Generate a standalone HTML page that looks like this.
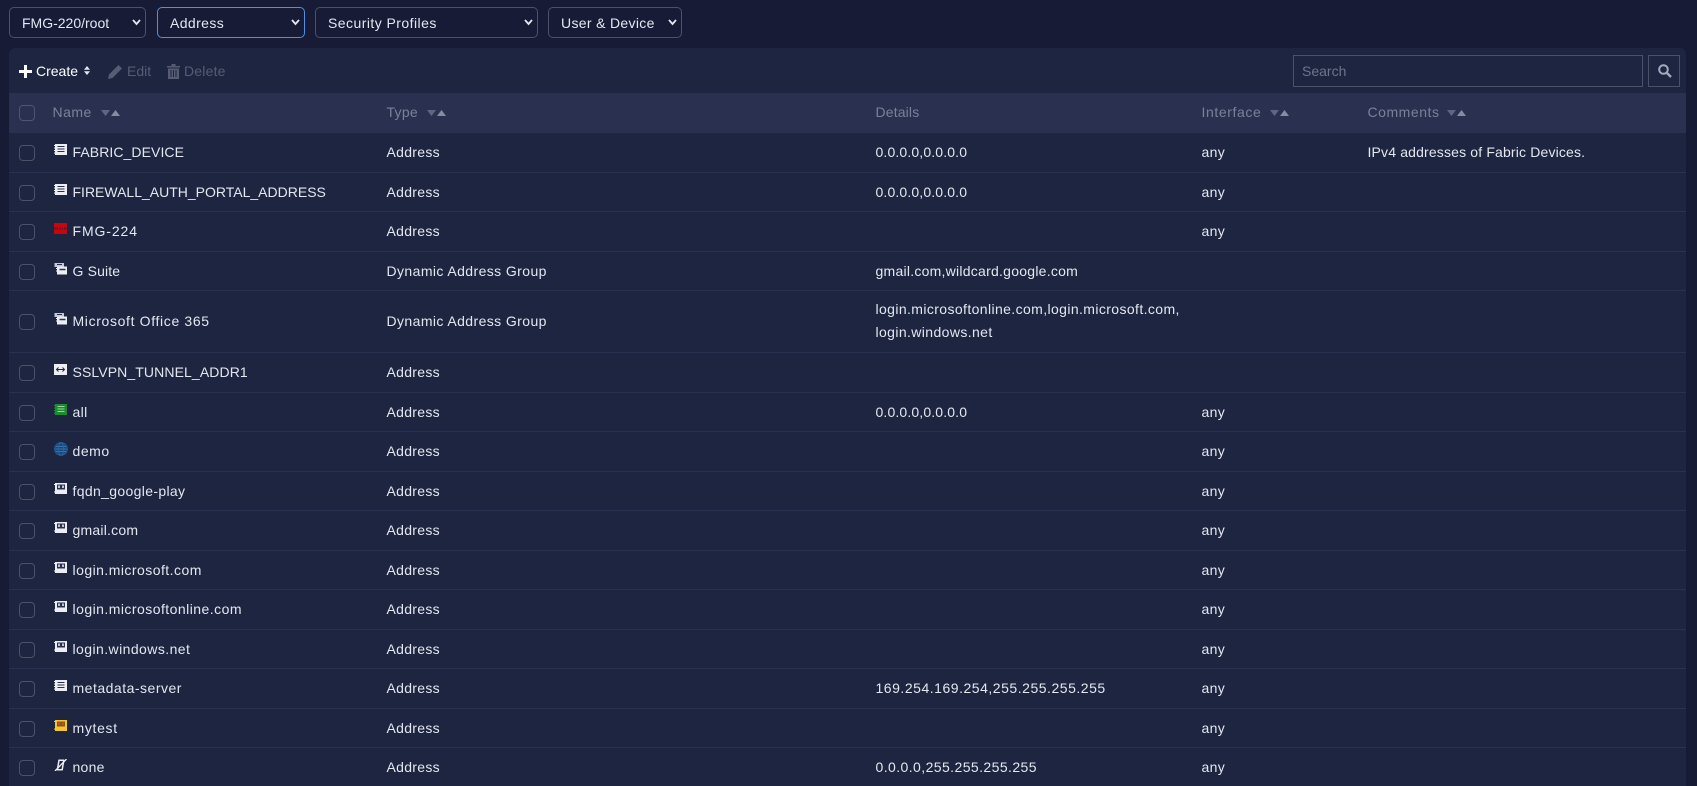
<!DOCTYPE html>
<html lang="en">
<head>
<meta charset="utf-8">
<title>Addresses</title>
<style>
*{box-sizing:border-box}
html,body{margin:0;padding:0;width:1697px;height:786px;overflow:hidden;background:#171b36;font-family:"Liberation Sans",sans-serif;font-size:14px;color:#e3e7f0}
.sel{position:absolute;top:7px;height:31px}
.sel select{appearance:none;-webkit-appearance:none;width:100%;height:100%;background:#171b36;border:1px solid #4b5169;border-radius:5px;color:#e3e7f0;font:14px "Liberation Sans",sans-serif;padding:0 0 0 12px;outline:0}
.sel.on select{border-color:#4f90e2}
.sel svg{position:absolute;right:5px;top:12px;pointer-events:none}
#panel{position:absolute;left:9px;top:48px;width:1677px;height:738px;background:#1e2540;border-radius:6px 6px 0 0;overflow:hidden}
.tb{position:absolute;white-space:nowrap;line-height:18px}
.dis{color:#565c74}
#search{position:absolute;left:1284px;top:7px;width:350px;height:32px;border:1px solid #4b5169;background:#1e2540;color:#6d748b;line-height:30px;padding-left:8px}
#sbtn{position:absolute;left:1639px;top:7px;width:32px;height:32px;border:1px solid #4b5169}
#head{position:absolute;left:0;top:45px;width:1677px;height:40px;background:#2a3150;color:#79819a;line-height:39px}
#head span.h{position:absolute;top:0;white-space:nowrap}
#head svg.s{position:absolute;top:17px}
.r{position:absolute;left:0;width:1677px;border-bottom:1px solid #2a3150}
.r span{position:absolute;top:50%;margin-top:-10px;line-height:20px;white-space:nowrap;color:#e3e7f0}
.n{left:63.5px}.t{left:377.5px;letter-spacing:.3px}.d{left:866.5px}.i{left:1192.5px;letter-spacing:.36px}.c{left:1358.5px;letter-spacing:.16px}
.cb{position:absolute;left:10px;top:50%;margin-top:-7px;width:16px;height:16px;border:1px solid #4b5169;border-radius:4px}
.r svg{position:absolute;left:45px;top:50%;margin-top:-8px}
.w2{line-height:23px!important;margin-top:-23px!important}
.dg{letter-spacing:.41px}
</style>
</head>
<body>
<div class="sel" style="left:9px;width:137px"><select><option>FMG-220/root</option></select><svg width="9" height="7" viewBox="0 0 9 7"><path d="M1 1l3.500 4L8 1" fill="none" stroke="#e3e7f0" stroke-width="1.8"/></svg></div>
<div class="sel on" style="left:157px;width:148px"><select style="letter-spacing:.4px"><option>Address</option></select><svg width="9" height="7" viewBox="0 0 9 7"><path d="M1 1l3.500 4L8 1" fill="none" stroke="#e3e7f0" stroke-width="1.8"/></svg></div>
<div class="sel" style="left:315px;width:223px"><select style="letter-spacing:.45px"><option>Security Profiles</option></select><svg width="9" height="7" viewBox="0 0 9 7"><path d="M1 1l3.500 4L8 1" fill="none" stroke="#e3e7f0" stroke-width="1.8"/></svg></div>
<div class="sel" style="left:548px;width:134px"><select style="letter-spacing:.33px"><option>User &amp; Device</option></select><svg width="9" height="7" viewBox="0 0 9 7"><path d="M1 1l3.500 4L8 1" fill="none" stroke="#e3e7f0" stroke-width="1.8"/></svg></div>

<div id="panel">
  <svg style="position:absolute;left:10px;top:17px" width="13" height="13" viewBox="0 0 13 13"><path d="M6.500 0v13M0 6.500h13" stroke="#fff" stroke-width="3"/></svg>
  <span class="tb" style="left:27px;top:14px;color:#fff">Create</span>
  <svg style="position:absolute;left:74.500px;top:18px" width="6" height="9" viewBox="0 0 6 9"><path d="M3 0l3 3.800H0zM3 9L0 5.200h6z" fill="#e3e7f0"/></svg>
  <svg style="position:absolute;left:99px;top:16px" width="15" height="15" viewBox="0 0 15 15"><path d="M0 15l1-4.500L10.500 1l3.500 3.500L4.500 14z" fill="#565c74"/></svg>
  <span class="tb dis" style="left:118px;top:14px">Edit</span>
  <svg style="position:absolute;left:158px;top:16px" width="13" height="15" viewBox="0 0 13 15"><path d="M0 2h4.500V0h4v2H13v1.500H0zM1 4.500h11V15H1z" fill="#565c74"/><path d="M4 6v7M6.500 6v7M9 6v7" stroke="#1e2540"/></svg>
  <span class="tb dis" style="left:175px;top:14px;letter-spacing:.2px">Delete</span>
  <div id="search">Search</div>
  <div id="sbtn"><svg style="position:absolute;left:9px;top:8px" width="14" height="14" viewBox="0 0 14 14"><circle cx="5.500" cy="5.500" r="4.300" fill="none" stroke="#a3aabc" stroke-width="2"/><path d="M8.800 8.800L13 13" stroke="#a3aabc" stroke-width="2.400"/></svg></div>

  <div id="head">
    <div class="cb" style="top:12px;margin:0;border-color:#4f566f"></div>
    <span class="h" style="left:43.500px;letter-spacing:.5px">Name</span>
    <svg class="s" style="left:91.500px" width="20" height="6" viewBox="0 0 20 6"><path d="M0 0h9L4.500 6z" fill="#5f6780"/><path d="M10 6h9L14.500 0z" fill="#858ca2"/></svg>
    <span class="h" style="left:377.500px;letter-spacing:.27px">Type</span>
    <svg class="s" style="left:417.500px" width="20" height="6" viewBox="0 0 20 6"><path d="M0 0h9L4.500 6z" fill="#5f6780"/><path d="M10 6h9L14.500 0z" fill="#858ca2"/></svg>
    <span class="h" style="left:866.500px;letter-spacing:.15px">Details</span>
    <span class="h" style="left:1192.500px;letter-spacing:.6px">Interface</span>
    <svg class="s" style="left:1261px" width="20" height="6" viewBox="0 0 20 6"><path d="M0 0h9L4.500 6z" fill="#5f6780"/><path d="M10 6h9L14.500 0z" fill="#858ca2"/></svg>
    <span class="h" style="left:1358.500px;letter-spacing:.54px">Comments</span>
    <svg class="s" style="left:1438px" width="20" height="6" viewBox="0 0 20 6"><path d="M0 0h9L4.500 6z" fill="#5f6780"/><path d="M10 6h9L14.500 0z" fill="#858ca2"/></svg>
  </div>

  <div class="r" style="top:85px;height:39.500px"><div class="cb"></div>
    <svg width="13" height="12" viewBox="0 0 13 12"><path d="M1 0h12v11H1z" fill="#eceef3"/><path d="M0 1.500h2M0 4h2M0 6.500h2M0 9h2" stroke="#eceef3"/><path d="M3.500 2.500h7M3.500 5h7M3.500 7.500h7" stroke="#2a3150"/></svg>
    <span class="n" style="letter-spacing:.08px">FABRIC_DEVICE</span><span class="t">Address</span><span class="d" style="letter-spacing:.14px">0.0.0.0,0.0.0.0</span><span class="i">any</span><span class="c">IPv4 addresses of Fabric Devices.</span></div>
  <div class="r" style="top:124.500px;height:39.500px"><div class="cb"></div>
    <svg width="13" height="12" viewBox="0 0 13 12"><path d="M1 0h12v11H1z" fill="#eceef3"/><path d="M0 1.500h2M0 4h2M0 6.500h2M0 9h2" stroke="#eceef3"/><path d="M3.500 2.500h7M3.500 5h7M3.500 7.500h7" stroke="#2a3150"/></svg>
    <span class="n">FIREWALL_AUTH_PORTAL_ADDRESS</span><span class="t">Address</span><span class="d" style="letter-spacing:.14px">0.0.0.0,0.0.0.0</span><span class="i">any</span></div>
  <div class="r" style="top:164px;height:39.500px"><div class="cb"></div>
    <svg width="13" height="12" viewBox="0 0 13 12"><path d="M0 0h13v11H0z" fill="#c8040f"/><path d="M0 5.500h13" stroke="#4a1a28" stroke-width="2" stroke-dasharray="1.500 1"/></svg>
    <span class="n" style="letter-spacing:.9px">FMG-224</span><span class="t">Address</span><span class="i">any</span></div>
  <div class="r" style="top:203.500px;height:39.500px"><div class="cb"></div>
    <svg width="13" height="12" viewBox="0 0 13 12"><path d="M1 0h9v4H1z" fill="#c4c8d4"/><path d="M0 1h2M0 3h2" stroke="#c4c8d4"/><path d="M3 1.500h5" stroke="#2a3150"/><path d="M3 3.500h10V11.500H3z" fill="#eceef3"/><path d="M2 5.500h2M2 8h2" stroke="#eceef3"/><path d="M5.500 6.500h6" stroke="#2a3150" stroke-width="1.500"/></svg>
    <span class="n" style="letter-spacing:.15px">G Suite</span><span class="t dg">Dynamic Address Group</span><span class="d" style="letter-spacing:.25px">gmail.com,wildcard.google.com</span></div>
  <div class="r" style="top:243px;height:61.500px"><div class="cb"></div>
    <svg width="13" height="12" viewBox="0 0 13 12"><path d="M1 0h9v4H1z" fill="#c4c8d4"/><path d="M0 1h2M0 3h2" stroke="#c4c8d4"/><path d="M3 1.500h5" stroke="#2a3150"/><path d="M3 3.500h10V11.500H3z" fill="#eceef3"/><path d="M2 5.500h2M2 8h2" stroke="#eceef3"/><path d="M5.500 6.500h6" stroke="#2a3150" stroke-width="1.500"/></svg>
    <span class="n" style="letter-spacing:.65px">Microsoft Office 365</span><span class="t dg">Dynamic Address Group</span><span class="d w2" style="letter-spacing:.39px">login.microsoftonline.com,login.microsoft.com,<br>login.windows.net</span></div>
  <div class="r" style="top:304.500px;height:40px"><div class="cb"></div>
    <svg width="13" height="12" viewBox="0 0 13 12"><path d="M0 0h13v11H0z" fill="#eceef3"/><path d="M2.500 5.500h8M4.500 3.500l-2 2 2 2M8.500 3.500l2 2-2 2" fill="none" stroke="#1e2540" stroke-width="1"/></svg>
    <span class="n" style="letter-spacing:.11px">SSLVPN_TUNNEL_ADDR1</span><span class="t">Address</span></div>
  <div class="r" style="top:344.500px;height:39px"><div class="cb"></div>
    <svg width="13" height="12" viewBox="0 0 13 12"><path d="M1 0h12v11H1z" fill="#1c8a2e"/><path d="M0 1.500h2M0 4h2M0 6.500h2M0 9h2" stroke="#1c8a2e"/><path d="M3.500 2.500h7M3.500 5h7M3.500 7.500h7" stroke="#9bd0a3"/></svg>
    <span class="n" style="letter-spacing:.36px">all</span><span class="t">Address</span><span class="d" style="letter-spacing:.14px">0.0.0.0,0.0.0.0</span><span class="i">any</span></div>
  <div class="r" style="top:383.500px;height:40px"><div class="cb"></div>
    <svg style="left:44.500px;margin-top:-9px" width="14" height="14" viewBox="0 0 14 14"><circle cx="7" cy="7" r="6.300" fill="#1a4478" stroke="#1f5c9c" stroke-width="1.200"/><path d="M2 4.500h10M1.500 7h11M2 9.500h10" stroke="#3a72ad" stroke-width=".9"/><ellipse cx="7" cy="7" rx="2.800" ry="6" fill="none" stroke="#2f659f" stroke-width=".9"/></svg>
    <span class="n" style="letter-spacing:.54px">demo</span><span class="t">Address</span><span class="i">any</span></div>
  <div class="r" style="top:423.500px;height:39px"><div class="cb"></div>
    <svg width="13" height="12" viewBox="0 0 13 12"><path d="M1 0h12v11H1z" fill="#eceef3"/><path d="M0 1.500h2M0 9h2" stroke="#eceef3"/><path d="M3 1.500h8v5H3z" fill="#2a3150"/><path d="M4 2.500h2v2.500H4zM8 2.500h2v2.500H8z" fill="#bfc4d2"/></svg>
    <span class="n" style="letter-spacing:.34px">fqdn_google-play</span><span class="t">Address</span><span class="i">any</span></div>
  <div class="r" style="top:462.500px;height:40px"><div class="cb"></div>
    <svg width="13" height="12" viewBox="0 0 13 12"><path d="M1 0h12v11H1z" fill="#eceef3"/><path d="M0 1.500h2M0 9h2" stroke="#eceef3"/><path d="M3 1.500h8v5H3z" fill="#2a3150"/><path d="M4 2.500h2v2.500H4zM8 2.500h2v2.500H8z" fill="#bfc4d2"/></svg>
    <span class="n" style="letter-spacing:.22px">gmail.com</span><span class="t">Address</span><span class="i">any</span></div>
  <div class="r" style="top:502.500px;height:39px"><div class="cb"></div>
    <svg width="13" height="12" viewBox="0 0 13 12"><path d="M1 0h12v11H1z" fill="#eceef3"/><path d="M0 1.500h2M0 9h2" stroke="#eceef3"/><path d="M3 1.500h8v5H3z" fill="#2a3150"/><path d="M4 2.500h2v2.500H4zM8 2.500h2v2.500H8z" fill="#bfc4d2"/></svg>
    <span class="n" style="letter-spacing:.46px">login.microsoft.com</span><span class="t">Address</span><span class="i">any</span></div>
  <div class="r" style="top:541.500px;height:40px"><div class="cb"></div>
    <svg width="13" height="12" viewBox="0 0 13 12"><path d="M1 0h12v11H1z" fill="#eceef3"/><path d="M0 1.500h2M0 9h2" stroke="#eceef3"/><path d="M3 1.500h8v5H3z" fill="#2a3150"/><path d="M4 2.500h2v2.500H4zM8 2.500h2v2.500H8z" fill="#bfc4d2"/></svg>
    <span class="n" style="letter-spacing:.46px">login.microsoftonline.com</span><span class="t">Address</span><span class="i">any</span></div>
  <div class="r" style="top:581.500px;height:39px"><div class="cb"></div>
    <svg width="13" height="12" viewBox="0 0 13 12"><path d="M1 0h12v11H1z" fill="#eceef3"/><path d="M0 1.500h2M0 9h2" stroke="#eceef3"/><path d="M3 1.500h8v5H3z" fill="#2a3150"/><path d="M4 2.500h2v2.500H4zM8 2.500h2v2.500H8z" fill="#bfc4d2"/></svg>
    <span class="n" style="letter-spacing:.43px">login.windows.net</span><span class="t">Address</span><span class="i">any</span></div>
  <div class="r" style="top:620.500px;height:40px"><div class="cb"></div>
    <svg width="13" height="12" viewBox="0 0 13 12"><path d="M1 0h12v11H1z" fill="#eceef3"/><path d="M0 1.500h2M0 4h2M0 6.500h2M0 9h2" stroke="#eceef3"/><path d="M3.500 2.500h7M3.500 5h7M3.500 7.500h7" stroke="#2a3150"/></svg>
    <span class="n" style="letter-spacing:.5px">metadata-server</span><span class="t">Address</span><span class="d" style="letter-spacing:.52px">169.254.169.254,255.255.255.255</span><span class="i">any</span></div>
  <div class="r" style="top:660.500px;height:39px"><div class="cb"></div>
    <svg width="13" height="12" viewBox="0 0 13 12"><path d="M1 0h12v11H1z" fill="#f5c52c"/><path d="M0 1.500h2M0 9h2" stroke="#f5c52c"/><path d="M3 1.500h8v5H3z" fill="#7a5a24"/><path d="M4 2.500h2v2.500H4zM8 2.500h2v2.500H8z" fill="#d8452c"/></svg>
    <span class="n" style="letter-spacing:.68px">mytest</span><span class="t">Address</span><span class="i">any</span></div>
  <div class="r" style="top:699.500px;height:39px;border-bottom:0"><div class="cb"></div>
    <svg width="13" height="12" viewBox="0 0 13 12"><path d="M5 1.200h4.800L8.200 10.800H3.400z" fill="none" stroke="#eceef3" stroke-width="1.500" stroke-linejoin="round"/><path d="M1 12L12.500 0" stroke="#eceef3" stroke-width="1.300"/></svg>
    <span class="n" style="letter-spacing:.27px">none</span><span class="t">Address</span><span class="d" style="letter-spacing:.42px">0.0.0.0,255.255.255.255</span><span class="i">any</span></div>
</div>
</body>
</html>
